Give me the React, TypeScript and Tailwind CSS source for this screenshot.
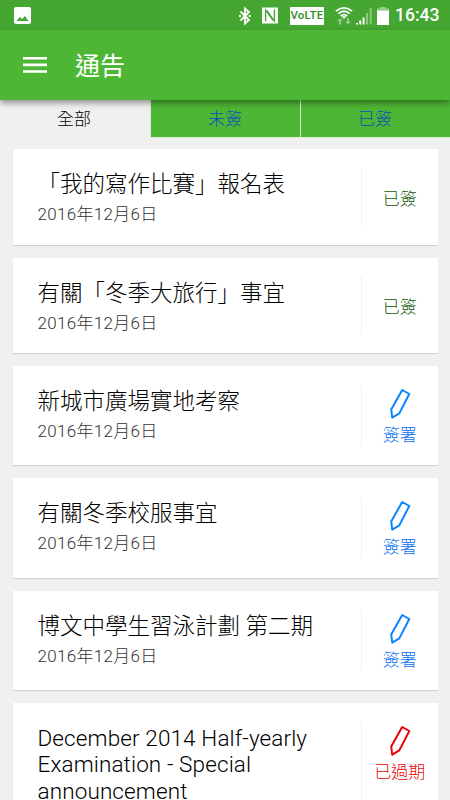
import React, { useState } from "react";

type NoticeStatus = "signed" | "pending" | "expired";

interface Notice {
  id: number;
  title: string;
  date?: string;
  status: NoticeStatus;
}

const tabs = ["全部", "未簽", "已簽"];

const notices: Notice[] = [
  { id: 1, title: "「我的寫作比賽」報名表", date: "2016年12月6日", status: "signed" },
  { id: 2, title: "有關「冬季大旅行」事宜", date: "2016年12月6日", status: "signed" },
  { id: 3, title: "新城市廣場實地考察", date: "2016年12月6日", status: "pending" },
  { id: 4, title: "有關冬季校服事宜", date: "2016年12月6日", status: "pending" },
  { id: 5, title: "博文中學生習泳計劃 第二期", date: "2016年12月6日", status: "pending" },
  {
    id: 6,
    title: "December 2014 Half-yearly Examination - Special announcement",
    status: "expired",
  },
];

const statusLabels: Record<NoticeStatus, string> = {
  signed: "已簽",
  pending: "簽署",
  expired: "已過期",
};

const statusColors: Record<NoticeStatus, string> = {
  signed: "text-[#0f5405]",
  pending: "text-[#0a6ff0]",
  expired: "text-[#ea0004]",
};

const cardHeights: Record<NoticeStatus, string> = {
  signed: "h-[95.5px]",
  pending: "h-[99.3px]",
  expired: "h-[150px]",
};

const StatusBar: React.FC = () => (
  <div className="flex h-[30px] shrink-0 items-center bg-[#45a631] pl-[14px] pr-[10px] pt-px text-white">
    <svg className="h-[17px] w-[17px]" viewBox="0 0 17 17">
      <rect width="17" height="17" rx="2" fill="white" />
      <path d="M2.5 14 L6 9.8 L8 12.2 L10.8 9 L14.5 14 Z" fill="#45a631" />
    </svg>

    {/* Bluetooth */}
    <svg className="ml-auto h-[20px] w-[14px]" viewBox="0 0 14 20" fill="none" stroke="white">
      <path d="M2.5 5.5 L11 14 L7 17.5 V2.5 L11 6 L2.5 14.5" strokeWidth="1.8" />
      <path d="M1 9.1 h2 v1.8 h-2 z M10.8 9.1 h2 v1.8 h-2 z" fill="white" stroke="none" />
    </svg>

    {/* NFC */}
    <svg className="ml-[10px] h-[17px] w-[16px]" viewBox="0 0 16 17">
      <path d="M0 0.5 H16 V16.5 H0 Z" fill="white" />
      <path
        d="M3.6 14.5 V3 L11 13.5 M5 3.5 L12.4 14 V2.5"
        fill="none"
        stroke="#45a631"
        strokeWidth="1.3"
      />
    </svg>

    <div className="ml-[12px] flex h-[18px] w-[34px] items-center justify-center rounded-[1px] bg-white text-[11.5px] font-medium leading-none tracking-[0.2px] text-[#2f8f1c]">
      VoLTE
    </div>

    {/* Wi-Fi with traffic arrows */}
    <svg className="ml-[11px] h-[20px] w-[18px]" viewBox="0 0 18 20" fill="none">
      <path
        d="M0.8 5.2 Q9 -1.6 17.2 5.2 M3.2 7.7 Q9 2.8 14.8 7.7 M5.6 10.1 Q9 7.2 12.4 10.1"
        stroke="white"
        strokeWidth="1.7"
      />
      <path d="M7 10.7 Q9 9.2 11 10.7 L9 13 Z" fill="white" />
      <path
        d="M5 12 L8 15 H6 V18.5 H4 V15 H2 Z M13 18.5 L10 15.5 H12 V12 H14 V15.5 H16 Z"
        fill="white"
        fillOpacity="0.4"
      />
    </svg>

    {/* Signal strength */}
    <svg className="ml-[3px] h-[18px] w-[16px]" viewBox="0 0 16 18" fill="white">
      <path d="M0 16 h2 v1.5 h-2 z M3.3 13.5 h2 v4 h-2 z M6.6 10.5 h2 v7 h-2 z" />
      <path d="M10 6 h2 v11.5 h-2 z M13.7 1 h2 v16.5 h-2 z" fillOpacity="0.4" />
    </svg>

    {/* Battery */}
    <svg className="ml-[5px] h-[18px] w-[12px]" viewBox="0 0 12 18" fill="white">
      <path d="M3.5 0 h5 v1.5 h3.5 v2 h-12 v-2 h3.5 z" fillOpacity="0.45" />
      <path d="M0 3.5 h12 v14.5 h-12 z" />
    </svg>

    <span className="ml-[6px] w-[45px] whitespace-nowrap pt-px text-[17.5px] font-medium leading-none">
      16:43
    </span>
  </div>
);

const Pencil: React.FC = () => (
  <svg
    className="h-[31px] w-[22px] shrink-0"
    viewBox="0 0 22 31"
    fill="none"
    strokeWidth="2"
    strokeLinejoin="round"
  >
    <path
      d="M13.2 2 L20.3 6 L10.3 25.4 L3.2 29.6 L2.2 21.4 Z"
      stroke="currentColor"
    />
  </svg>
);

const NoticeCard: React.FC<{ notice: Notice }> = ({ notice }) => (
  <div
    className={`flex shrink-0 rounded-[1px] bg-white shadow-[0_1px_1px_#cfcfcf] ${cardHeights[notice.status]}`}
  >
    <div className="flex-1 pl-[25px] pr-[30px] pt-[22px]">
      <h2
        className={`text-[22.5px] font-light text-black ${
          notice.status === "expired" ? "leading-[26.5px] tracking-[0.12px]" : "leading-[27px]"
        }`}
      >
        {notice.title}
      </h2>
      {notice.date && (
        <p className="mt-[5px] text-[17px] font-light leading-[22px] tracking-[0.3px] text-[#333]">
          {notice.date}
        </p>
      )}
    </div>
    <div
      className={`my-[19px] flex w-[76.5px] flex-col items-center border-l-[1.5px] border-[#f0f0f0] ${statusColors[notice.status]} ${
        notice.status === "signed" ? "justify-center pt-[4px]" : "gap-[4px] pt-[3px]"
      }`}
    >
      {notice.status === "pending" && (
        <span className="flex text-[#0a84ff]">
          <Pencil />
        </span>
      )}
      {notice.status === "expired" && <Pencil />}
      <span className="text-[17px] font-light leading-[24px]">{statusLabels[notice.status]}</span>
    </div>
  </div>
);

const App: React.FC = () => {
  const [activeTab, setActiveTab] = useState(0);

  return (
    <div className="flex h-[800px] w-[450px] flex-col overflow-hidden bg-[#f0f0f0] font-[Roboto,'Noto_Sans_CJK_TC',sans-serif]">
      <StatusBar />

      <header className="relative z-10 flex h-[70px] shrink-0 items-center bg-[#4db735] pl-[23px] text-white shadow-[0_3px_6px_rgba(0,0,0,0.4)]">
        <button aria-label="Menu">
          <svg className="h-[16px] w-[24px]" viewBox="0 0 24 16" fill="white">
            <path d="M0 0 h24 v2.6 h-24 z M0 6.6 h24 v2.6 h-24 z M0 13.2 h24 v2.6 h-24 z" />
          </svg>
        </button>
        <h1 className="ml-[28px] pt-[2px] text-[25px] leading-none">通告</h1>
      </header>

      <nav className="grid h-[38px] shrink-0 grid-cols-3">
        {tabs.map((tab, index) => (
          <button
            key={tab}
            onClick={() => setActiveTab(index)}
            className={`border-b pt-[3px] text-[17px] font-light ${
              index === activeTab
                ? "border-[#f0f0f0] pr-[2px] text-black"
                : "border-l border-b-[#d8efd2] border-l-[#d8efd2] bg-[#4db735] pr-px text-[#0650b8]"
            }`}
          >
            {tab}
          </button>
        ))}
      </nav>

      <main className="flex flex-col gap-[13px] px-[12.5px] pt-[11px]">
        {notices.map((notice) => (
          <NoticeCard key={notice.id} notice={notice} />
        ))}
      </main>
    </div>
  );
};

export default App;
